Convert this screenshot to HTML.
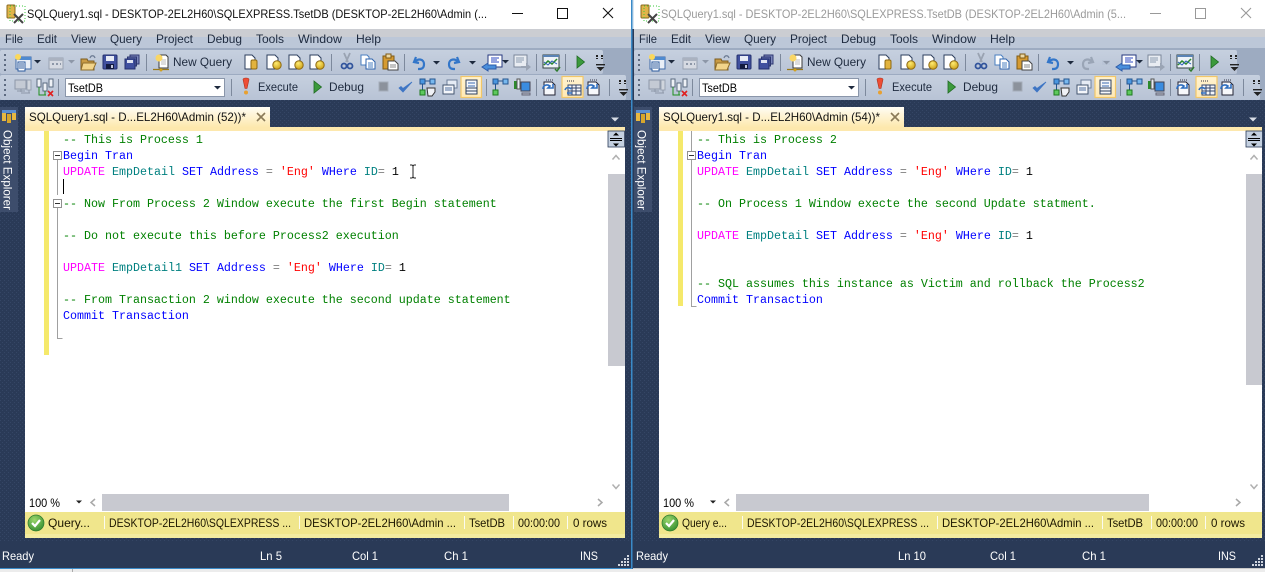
<!DOCTYPE html>
<html><head><meta charset="utf-8"><title>SQLQuery1.sql</title>
<style>
html,body{margin:0;padding:0;background:#e8e8e8;overflow:hidden}
svg{display:block}
text{font-family:"Liberation Sans",sans-serif;font-size:12px;fill:#1e2a3e;white-space:pre}
.c text,text.m{font-family:"Liberation Mono",monospace;font-size:11.67px}
.w{fill:#fff}
.k{fill:#00f}.g{fill:#008000}.p{fill:#f0f}.t{fill:#008080}.s{fill:#f00}.o{fill:#808080}.b{fill:#000}
.st{fill:#1c1600}
</style></head><body>
<svg width="1265" height="572" viewBox="0 0 1265 572" xmlns="http://www.w3.org/2000/svg">
<defs>
<pattern id="dots" width="4" height="4" patternUnits="userSpaceOnUse"><rect width="4" height="4" fill="#2a3a57"/><rect width="1" height="1" fill="#354665"/><rect x="2" y="2" width="1" height="1" fill="#354665"/></pattern>
<linearGradient id="tab" x1="0" y1="0" x2="0" y2="1"><stop offset="0" stop-color="#fffdf6"/><stop offset=".35" stop-color="#fef5da"/><stop offset="1" stop-color="#fde9ae"/></linearGradient>
<linearGradient id="tb" x1="0" y1="0" x2="0" y2="1"><stop offset="0" stop-color="#c6d0df"/><stop offset="1" stop-color="#b8c3d5"/></linearGradient>
<linearGradient id="hl" x1="0" y1="0" x2="0" y2="1"><stop offset="0" stop-color="#fff3d0"/><stop offset="1" stop-color="#ffe9b5"/></linearGradient>
<radialGradient id="gok" cx=".4" cy=".3" r=".8"><stop offset="0" stop-color="#9bd66c"/><stop offset="1" stop-color="#2e8a2c"/></radialGradient>
<radialGradient id="gy" cx=".4" cy=".3" r=".8"><stop offset="0" stop-color="#ffeb70"/><stop offset="1" stop-color="#c89a10"/></radialGradient>

<g id="grip"><rect x="0" y="0" width="2" height="2" fill="#5d6a80"/><rect x="0" y="5" width="2" height="2" fill="#5d6a80"/><rect x="0" y="10" width="2" height="2" fill="#5d6a80"/><rect x="0" y="15" width="2" height="2" fill="#5d6a80"/></g>
<g id="endg"><path d="M2 0v4M7 0v4" stroke="#222" stroke-width="2" stroke-dasharray="2 1"/><rect x="1" y="9" width="9" height="1.4" fill="#222"/><path d="M1.500 12h8l-4 4z" fill="#222"/></g>
<path id="da" d="M0 0h7l-3.500 3.500z" fill="#1e2a3e"/>
<path id="dag" d="M0 0h7l-3.500 3.500z" fill="#8d97a8"/>
<g id="cyl"><path d="M1 1h7l3 3v11H1z" fill="#fff" stroke="#2d3f5e"/><rect x="7" y="6" width="6" height="9" rx="1.500" fill="#e2b33d" stroke="#8f6a12"/></g>
<g id="coin"><path d="M1 1h8l3 3v11H1z" fill="#fff" stroke="#2d3f5e"/><circle cx="11" cy="11" r="4.200" fill="url(#gy)" stroke="#8f6a12"/></g>
<g id="bin"><path d="M1 2h8l3 3v10H1z" fill="#f7f8fb" stroke="#223"/><path d="M3 0h3M7 0h3" stroke="#334" stroke-dasharray="1 1"/><path d="M0 9c0-4 4-5 7-3l-2 2 5 0 0-4" fill="none" stroke="#2f6fc0" stroke-width="1.600"/></g>

<g id="toolbars">
<!-- bands -->
<rect x="0" y="47" width="631" height="53" fill="#9dabc1"/>
<rect x="0" y="37" width="631" height="11" fill="#bcc7d8"/>
<rect x="0" y="29" width="631" height="8" fill="#cbcdd2"/>
<rect x="0" y="50" width="603" height="24" rx="2" fill="url(#tb)"/>
<rect x="0" y="75" width="626" height="25" rx="2" fill="url(#tb)"/>
<use href="#grip" x="4" y="54"/><use href="#grip" x="4" y="79"/>
<!-- row1 -->
<g transform="translate(14 54)"><rect x="2" y="3" width="15" height="12" fill="#e9eef6" stroke="#3f6aa8"/><rect x="2" y="3" width="15" height="3" fill="#4f8ad0"/><rect x="4" y="8" width="7" height="9" fill="#fff" stroke="#2b5a9e"/><path d="M5 10h5M5 12h5M5 14h5" stroke="#2b5a9e"/><circle cx="4" cy="3" r="3" fill="#fbd85a"/></g>
<use href="#da" x="34" y="60"/>
<g transform="translate(48 54)"><rect x="1" y="4" width="14" height="11" fill="#d6dae2" stroke="#98a2b2"/><rect x="1" y="4" width="14" height="3" fill="#aab2c0"/><path d="M4 10h2M8 10h2M12 10h1" stroke="#8d97a8" stroke-width="2"/></g>
<use href="#dag" x="68" y="60"/>
<g transform="translate(80 54)"><path d="M1 5h6l1 2h6v9H1z" fill="#c99b45" stroke="#7c5c21"/><path d="M3 9h13l-3 7H1z" fill="#f2d48a" stroke="#8f6e2c"/><path d="M10 4c1-3 4-3 5 0" fill="none" stroke="#6d7c94" stroke-width="1.300"/></g>
<g transform="translate(103 55)"><rect x="0" y="0" width="14" height="14" rx="1" fill="#40509f" stroke="#232f6e"/><rect x="3" y="1" width="8" height="5" fill="#e8ecf6"/><rect x="3" y="9" width="8" height="5" fill="#121a40"/><rect x="8" y="10" width="2" height="3" fill="#c4c9dd"/></g>
<g transform="translate(125 55)"><rect x="5" y="0" width="9" height="9" fill="#7b87bb" stroke="#2c3670"/><rect x="2.500" y="2" width="9" height="9" fill="#5e6bab" stroke="#2c3670"/><rect x="0" y="4" width="10" height="10" fill="#40509f" stroke="#232f6e"/><rect x="2" y="5" width="6" height="3" fill="#dfe4f2"/></g>
<rect x="146" y="54" width="1" height="17" fill="#7d899c"/>
<g transform="translate(153 53)"><path d="M6 2h7l2 2v11H6z" fill="#fff" stroke="#3b3b3b"/><path d="M8 7h5M8 9h5M8 11h5" stroke="#bbb"/><circle cx="6" cy="5" r="3.500" fill="#f9d665"/><path d="M0 16.500h16M8 15v3" stroke="#9a7a1a" stroke-width="1.300"/><circle cx="8" cy="17" r="1.500" fill="#d0a020"/></g>
<use href="#cyl" x="244" y="54"/><use href="#coin" x="266" y="54"/><use href="#coin" x="288" y="54"/><use href="#coin" x="309" y="54"/>
<rect x="331" y="54" width="1" height="17" fill="#7d899c"/>
<g transform="translate(341 53)"><path d="M3 0l4 9M9 0L5 9" stroke="#9aa3b2" stroke-width="1.800"/><circle cx="3" cy="13" r="2.500" fill="none" stroke="#31549c" stroke-width="1.800"/><circle cx="9" cy="13" r="2.500" fill="none" stroke="#31549c" stroke-width="1.800"/></g>
<g transform="translate(361 55)"><path d="M0 0h6l2 2v8H0z" fill="#fff" stroke="#4a7fc0"/><path d="M5 4h6l3 3v7H5z" fill="#fff" stroke="#2d63ad"/><path d="M7 8h5M7 10h5M7 12h5" stroke="#4a7fc0"/></g>
<g transform="translate(382 54)"><rect x="1" y="2" width="11" height="13" fill="#d69b32" stroke="#7f5a14"/><rect x="4" y="0" width="5" height="4" fill="#ecd9a6" stroke="#7f5a14"/><path d="M6 7h7l3 3v6H6z" fill="#fff" stroke="#444"/><path d="M8 11h6M8 13h6" stroke="#888"/></g>
<rect x="404" y="54" width="1" height="17" fill="#7d899c"/>
<path d="M416 57l-2 5 5 1M415 62c3-4 9-3 9 2s-3 5-6 5" fill="none" stroke="#3376c9" stroke-width="2.200"/>
<use href="#da" x="433" y="61"/>
<use href="#da" x="469" y="61"/>
<g transform="translate(481 54)"><rect x="7" y="1" width="14" height="12" fill="#fff" stroke="#26387f"/><path d="M10 4h8M10 6h6M10 8h8" stroke="#2c49c0"/><path d="M1 13l6-4v2h8v4H7v2z" fill="#4a8fdc" stroke="#2d5ba8"/></g>
<use href="#da" x="502" y="60"/>
<g transform="translate(514 55)"><rect x="0" y="0" width="13" height="12" fill="#e8ecf2" stroke="#7b879a"/><path d="M2 3h8M2 5h8M2 7h6" stroke="#8d9bb0"/><path d="M7 11h5V8l5 4-5 4v-3H7z" fill="#9aa4b4"/></g>
<rect x="536" y="54" width="1" height="17" fill="#7d899c"/>
<g transform="translate(543 54)"><rect x="0" y="1" width="16" height="13" fill="#eef3f8" stroke="#344"/><rect x="0" y="1" width="16" height="2" fill="#5a83b5"/><path d="M1 11l4-4 4 3 5-5" fill="none" stroke="#2d8a2d" stroke-width="1.500"/><path d="M1 8l4 3 4-4 5 3" fill="none" stroke="#2d5fb8"/><path d="M12 15l2 2 3-4" fill="none" stroke="#2d7a2d" stroke-width="1.500"/></g>
<rect x="565" y="54" width="1" height="17" fill="#7d899c"/>
<path d="M577 56l7.500 6-7.500 6z" fill="#3c9a3c" stroke="#1f6a22" stroke-width=".8"/>
<use href="#endg" x="595" y="55"/>
<!-- row 2 -->
<g transform="translate(14 79)"><rect x="1" y="1" width="11" height="9" fill="#c4cad4" stroke="#8d97a8"/><path d="M3 12h8M7 10v3" stroke="#8d97a8"/><rect x="13" y="1" width="4" height="10" fill="#d0d5dd" stroke="#98a2b2"/><path d="M7 14h9M15 11v3" stroke="#8d97a8"/></g>
<g transform="translate(37 79)"><rect x="0" y="0" width="4" height="8" fill="#eef1f6" stroke="#5a6a80"/><rect x="6" y="4" width="4" height="8" fill="#eef1f6" stroke="#5a6a80"/><rect x="12" y="0" width="4" height="8" fill="#eef1f6" stroke="#5a6a80"/><path d="M2 8v8h7M8 12v4" fill="none" stroke="#1d8f1d"/><path d="M11 12l5 5M16 12l-5 5" stroke="#e02020" stroke-width="1.600"/></g>
<rect x="58" y="79" width="1" height="17" fill="#7d899c"/>
<rect x="65.500" y="78.500" width="159" height="18" fill="#fff" stroke="#8a96aa"/>
<use href="#da" x="214" y="86"/>
<rect x="231" y="79" width="1" height="17" fill="#7d899c"/>
<path d="M243 79.500c0-2 6-2 6 0l-2 9h-2z" fill="#ee4d35" stroke="#a9331f" stroke-width=".6"/><circle cx="246" cy="92.500" r="2" fill="#e8a030"/>
<path d="M314 81l7.500 6-7.500 6z" fill="#3c9a3c" stroke="#1f6a22" stroke-width=".8"/>
<rect x="379" y="82" width="9" height="9" fill="#8c929c" stroke="#a5adba"/>
<path d="M399 88l4 4 9-10-9 6.500-2-2z" fill="#3e75c4" stroke="#3e75c4" stroke-width=".8"/>
<g transform="translate(420 79)"><rect x="0" y="0" width="5" height="5" fill="#4a97e0" stroke="#25558f"/><rect x="10" y="0" width="5" height="5" fill="#78b8ee" stroke="#25558f"/><path d="M5 2h5M2.500 5v6" stroke="#25558f"/><rect x="0" y="11" width="5" height="5" fill="#5ec95e" stroke="#1f7a1f"/><path d="M7 9h8v4l-3 4H8z" fill="#f0f2f6" stroke="#333"/></g>
<g transform="translate(443 80)"><rect x="4" y="0" width="10" height="8" fill="#e6ecf5" stroke="#6d7f9a"/><rect x="0" y="5" width="11" height="9" fill="#f4f6fa" stroke="#445670"/><path d="M2 8h7M2 10h7" stroke="#5070a0"/></g>
<rect x="461" y="76.500" width="20.500" height="21" fill="url(#hl)" stroke="#f2c768" stroke-width="1.200"/>
<g transform="translate(466 80)"><rect x="0" y="0" width="11" height="14" fill="#f6f8fb" stroke="#2d3f5e"/><path d="M2 3h7M2 6h7" stroke="#3b6ab0"/><path d="M0 8h11M0 11h11" stroke="#2d3f5e"/></g>
<rect x="486" y="79" width="1" height="17" fill="#7d899c"/>
<g transform="translate(493 79)"><rect x="0" y="0" width="5" height="5" fill="#4a97e0" stroke="#25558f"/><rect x="10" y="0" width="5" height="5" fill="#78b8ee" stroke="#25558f"/><path d="M5 2h5M2.500 5v6" stroke="#25558f"/><rect x="0" y="11" width="5" height="5" fill="#5ec95e" stroke="#1f7a1f"/></g>
<g transform="translate(514 79)"><rect x="0" y="2" width="3" height="8" fill="#2d8a2d"/><rect x="3" y="0" width="3" height="10" fill="#e8ecf2" stroke="#555"/><rect x="7" y="3" width="9" height="9" fill="#3a8ce0" stroke="#445"/><rect x="8" y="14" width="8" height="2" fill="#b5bcc8" stroke="#667"/></g>
<rect x="536" y="79" width="1" height="17" fill="#7d899c"/>
<use href="#bin" x="543" y="80"/>
<rect x="562" y="76.500" width="21" height="21" fill="url(#hl)" stroke="#f2c768" stroke-width="1.200"/>
<g transform="translate(565 80)"><path d="M3 5h13v10H3zM3 8h13M3 11h13M7 5v10M11 5v10" fill="#f5f7fa" stroke="#33456a"/><path d="M2 1h3M6 1h3" stroke="#334" stroke-dasharray="1 1"/><path d="M0 10c1-3 4-3 6-1M2 13h5" fill="none" stroke="#2f6fc0" stroke-width="1.600"/></g>
<use href="#bin" x="587" y="80"/>
<rect x="609" y="79" width="1" height="17" fill="#7d899c"/>
<use href="#endg" x="618" y="80"/>
</g>
</defs>

<rect width="1265" height="572" fill="#e6e6e6"/>
<!-- LEFT WINDOW -->
<rect x="0" y="0" width="632" height="29" fill="#fff"/>
<use href="#toolbars"/>
<rect x="0" y="100" width="631" height="468" fill="url(#dots)"/>
<!-- RIGHT WINDOW -->
<rect x="633" y="0" width="632" height="29" fill="#fff"/>
<use href="#toolbars" x="634"/>
<rect x="1265" y="0" width="2" height="100" fill="#fff"/>
<rect x="633" y="100" width="632" height="468" fill="url(#dots)"/>
<rect x="631" y="0" width="1.500" height="569" fill="#3a8ac8"/>
<rect x="632.500" y="0" width="1.500" height="569" fill="#2a3a57"/>
<rect x="632.500" y="0" width="1.500" height="29" fill="#d8e6f2"/>
<rect x="0" y="568" width="632" height="1" fill="#3a8ac8"/>
<rect x="0" y="569" width="1265" height="3" fill="#ececec"/>
<rect x="72" y="569" width="1" height="3" fill="#aaa"/>
<rect x="633" y="568" width="632" height="1" fill="#c9c9c9"/>

<!-- Title icons -->
<g transform="translate(7 5)"><rect x="0" y="0" width="8" height="13" rx="1" fill="#e0b44a" stroke="#8a6a20"/><rect x="3" y="1" width="15" height="15" fill="none" stroke="#3cc93c" stroke-dasharray="1 2"/><path d="M7 9l9 9M16 9l-9 9" stroke="#444" stroke-width="2"/></g>
<g transform="translate(641 5)"><rect x="0" y="0" width="8" height="13" rx="1" fill="#e0b44a" stroke="#8a6a20"/><rect x="3" y="1" width="15" height="15" fill="none" stroke="#3cc93c" stroke-dasharray="1 2"/><path d="M7 9l9 9M16 9l-9 9" stroke="#444" stroke-width="2"/></g>
<!-- Title text -->
<text x="27" y="18" textLength="460" lengthAdjust="spacingAndGlyphs" fill="#000" style="fill:#111">SQLQuery1.sql - DESKTOP-2EL2H60\SQLEXPRESS.TsetDB (DESKTOP-2EL2H60\Admin (...</text>
<text x="661" y="18" textLength="465" lengthAdjust="spacingAndGlyphs" style="fill:#9a9a9a">SQLQuery1.sql - DESKTOP-2EL2H60\SQLEXPRESS.TsetDB (DESKTOP-2EL2H60\Admin (5...</text>
<!-- Window controls -->
<path d="M512 13.500h11" stroke="#111"/><rect x="557.500" y="8.500" width="10" height="10" fill="none" stroke="#111"/><path d="M603 8l10 10M613 8l-10 10" stroke="#111" stroke-width="1.100"/>
<path d="M1150 13.500h11" stroke="#999"/><rect x="1195.500" y="8.500" width="10" height="10" fill="none" stroke="#999"/><path d="M1241 8l10 10M1251 8l-10 10" stroke="#999" stroke-width="1.100"/>

<!-- Menus -->
<g id="menuL">
<text x="5" y="43" textLength="18" lengthAdjust="spacingAndGlyphs">File</text><text x="37" y="43" textLength="20" lengthAdjust="spacingAndGlyphs">Edit</text><text x="71" y="43" textLength="25" lengthAdjust="spacingAndGlyphs">View</text><text x="110" y="43" textLength="32" lengthAdjust="spacingAndGlyphs">Query</text><text x="156" y="43" textLength="37" lengthAdjust="spacingAndGlyphs">Project</text><text x="207" y="43" textLength="35" lengthAdjust="spacingAndGlyphs">Debug</text><text x="256" y="43" textLength="28" lengthAdjust="spacingAndGlyphs">Tools</text><text x="298" y="43" textLength="44" lengthAdjust="spacingAndGlyphs">Window</text><text x="356" y="43" textLength="25" lengthAdjust="spacingAndGlyphs">Help</text>
<text x="173" y="66" textLength="59" lengthAdjust="spacingAndGlyphs">New Query</text>
<text x="68" y="92" textLength="35" lengthAdjust="spacingAndGlyphs" style="fill:#000">TsetDB</text>
<text x="258" y="91" textLength="40" lengthAdjust="spacingAndGlyphs">Execute</text>
<text x="329" y="91" textLength="35" lengthAdjust="spacingAndGlyphs">Debug</text>
</g>
<g transform="translate(634 0)">
<text x="5" y="43" textLength="18" lengthAdjust="spacingAndGlyphs">File</text><text x="37" y="43" textLength="20" lengthAdjust="spacingAndGlyphs">Edit</text><text x="71" y="43" textLength="25" lengthAdjust="spacingAndGlyphs">View</text><text x="110" y="43" textLength="32" lengthAdjust="spacingAndGlyphs">Query</text><text x="156" y="43" textLength="37" lengthAdjust="spacingAndGlyphs">Project</text><text x="207" y="43" textLength="35" lengthAdjust="spacingAndGlyphs">Debug</text><text x="256" y="43" textLength="28" lengthAdjust="spacingAndGlyphs">Tools</text><text x="298" y="43" textLength="44" lengthAdjust="spacingAndGlyphs">Window</text><text x="356" y="43" textLength="25" lengthAdjust="spacingAndGlyphs">Help</text>
<text x="173" y="66" textLength="59" lengthAdjust="spacingAndGlyphs">New Query</text>
<text x="68" y="92" textLength="35" lengthAdjust="spacingAndGlyphs" style="fill:#000">TsetDB</text>
<text x="258" y="91" textLength="40" lengthAdjust="spacingAndGlyphs">Execute</text>
<text x="329" y="91" textLength="35" lengthAdjust="spacingAndGlyphs">Debug</text>
</g>
<!-- redo -->
<path d="M457 57l2 5-5 1M458 62c-3-4-9-3-9 2s3 5 6 5" fill="none" stroke="#3376c9" stroke-width="2.200"/>
<path d="M1091 57l2 5-5 1M1092 62c-3-4-9-3-9 2s3 5 6 5" fill="none" stroke="#9aa5b6" stroke-width="2.200"/>
<rect x="1102" y="60" width="8" height="5" fill="#b9c4d6"/><use href="#dag" x="1103" y="61"/>

<!-- Sidebars -->
<rect x="0" y="107" width="18" height="105" fill="#3d4d6c"/>
<rect x="634" y="107" width="18" height="105" fill="#3d4d6c"/>
<g id="oe"><rect x="2" y="110" width="14" height="3" fill="#5c8fd0"/><rect x="2" y="113" width="4" height="8" fill="#e8b840"/><rect x="7" y="114" width="4" height="9" fill="#d6a52c"/><rect x="12" y="113" width="4" height="7" fill="#e8b840"/></g>
<use href="#oe" x="634"/>
<text transform="translate(3.500 130) rotate(90)" textLength="80" lengthAdjust="spacingAndGlyphs" class="w" style="fill:#fff">Object Explorer</text>
<text transform="translate(637.500 130) rotate(90)" textLength="80" lengthAdjust="spacingAndGlyphs" style="fill:#fff">Object Explorer</text>

<!-- Tabs -->
<path d="M25 127v-20h245v20z" fill="url(#tab)"/>
<path d="M659 127v-20h245v20z" fill="url(#tab)"/>
<text x="29" y="121" textLength="217" lengthAdjust="spacingAndGlyphs" style="fill:#111">SQLQuery1.sql - D...EL2H60\Admin (52))*</text>
<text x="663" y="121" textLength="217" lengthAdjust="spacingAndGlyphs" style="fill:#111">SQLQuery1.sql - D...EL2H60\Admin (54))*</text>
<path d="M257 113l8 8M265 113l-8 8" stroke="#8a7a58" stroke-width="1.600"/>
<path d="M891 113l8 8M899 113l-8 8" stroke="#8a7a58" stroke-width="1.600"/>
<path d="M611 117.500h8l-4 4z" fill="#d8dde6"/>
<path d="M1249 117.500h8l-4 4z" fill="#d8dde6"/>

<!-- Editors -->
<rect x="25" y="127" width="600" height="4" fill="#fde8ad"/>
<rect x="659" y="127" width="603" height="4" fill="#fde8ad"/>
<rect x="25" y="131" width="600" height="363" fill="#fff"/>
<rect x="659" y="131" width="603" height="363" fill="#fff"/>
<rect x="25" y="494" width="600" height="18" fill="#fff"/>
<rect x="659" y="494" width="603" height="18" fill="#fff"/>
<!-- margin bars -->
<rect x="44" y="131" width="5" height="224" fill="#f5e96b"/>
<rect x="678" y="131" width="5" height="175" fill="#f5e96b"/>
<!-- fold -->
<path d="M57.500 160v35M57.500 208v130.500h5" fill="none" stroke="#a0a0a0"/>
<rect x="53.500" y="151.500" width="8" height="8" fill="#fff" stroke="#909090"/><path d="M55 155.500h5" stroke="#333"/>
<rect x="53.500" y="199.500" width="8" height="8" fill="#fff" stroke="#909090"/><path d="M55 203.500h5" stroke="#333"/>
<path d="M691.500 131v20M691.500 160v146.500h5" fill="none" stroke="#a0a0a0"/>
<rect x="687.500" y="151.500" width="8" height="8" fill="#fff" stroke="#909090"/><path d="M689 155.500h5" stroke="#333"/>
<!-- code left -->
<g class="c">
<text x="63" y="143" class="g" style="fill:#008000">-- This is Process 1</text>
<text x="63" y="159" style="fill:#00f">Begin Tran</text>
<text x="63" y="175"><tspan class="p">UPDATE</tspan><tspan> </tspan><tspan class="t">EmpDetail</tspan><tspan> </tspan><tspan class="k">SET</tspan><tspan> </tspan><tspan class="k">Address</tspan><tspan> </tspan><tspan class="o">=</tspan><tspan> </tspan><tspan class="s">'Eng'</tspan><tspan> </tspan><tspan class="k">WHere</tspan><tspan> </tspan><tspan class="t">ID</tspan><tspan class="o">=</tspan><tspan> </tspan><tspan class="b">1</tspan></text>
<text x="63" y="207" style="fill:#008000">-- Now From Process 2 Window execute the first Begin statement</text>
<text x="63" y="239" style="fill:#008000">-- Do not execute this before Process2 execution</text>
<text x="63" y="271"><tspan class="p">UPDATE</tspan><tspan> </tspan><tspan class="t">EmpDetail1</tspan><tspan> </tspan><tspan class="k">SET</tspan><tspan> </tspan><tspan class="k">Address</tspan><tspan> </tspan><tspan class="o">=</tspan><tspan> </tspan><tspan class="s">'Eng'</tspan><tspan> </tspan><tspan class="k">WHere</tspan><tspan> </tspan><tspan class="t">ID</tspan><tspan class="o">=</tspan><tspan> </tspan><tspan class="b">1</tspan></text>
<text x="63" y="303" style="fill:#008000">-- From Transaction 2 window execute the second update statement</text>
<text x="63" y="319" style="fill:#00f">Commit Transaction</text>
<!-- code right -->
<text x="697" y="143" style="fill:#008000">-- This is Process 2</text>
<text x="697" y="159" style="fill:#00f">Begin Tran</text>
<text x="697" y="175"><tspan class="p">UPDATE</tspan><tspan> </tspan><tspan class="t">EmpDetail</tspan><tspan> </tspan><tspan class="k">SET</tspan><tspan> </tspan><tspan class="k">Address</tspan><tspan> </tspan><tspan class="o">=</tspan><tspan> </tspan><tspan class="s">'Eng'</tspan><tspan> </tspan><tspan class="k">WHere</tspan><tspan> </tspan><tspan class="t">ID</tspan><tspan class="o">=</tspan><tspan> </tspan><tspan class="b">1</tspan></text>
<text x="697" y="207" style="fill:#008000">-- On Process 1 Window execte the second Update statment.</text>
<text x="697" y="239"><tspan class="p">UPDATE</tspan><tspan> </tspan><tspan class="t">EmpDetail</tspan><tspan> </tspan><tspan class="k">SET</tspan><tspan> </tspan><tspan class="k">Address</tspan><tspan> </tspan><tspan class="o">=</tspan><tspan> </tspan><tspan class="s">'Eng'</tspan><tspan> </tspan><tspan class="k">WHere</tspan><tspan> </tspan><tspan class="t">ID</tspan><tspan class="o">=</tspan><tspan> </tspan><tspan class="b">1</tspan></text>
<text x="697" y="287" style="fill:#008000">-- SQL assumes this instance as Victim and rollback the Process2</text>
<text x="697" y="303" style="fill:#00f">Commit Transaction</text>
</g>
<!-- caret & I-beam -->
<rect x="63" y="179" width="1" height="15" fill="#000"/>
<path d="M410 165h2l1 1 1-1h2M413 166v11M410 178h2l1-1 1 1h2" fill="none" stroke="#222"/>

<!-- scrollbars v -->
<rect x="608" y="174" width="17" height="192" fill="#c8c9d0"/>
<rect x="1246" y="174" width="16" height="211" fill="#c8c9d0"/>
<g id="split"><rect x="608" y="131" width="16.500" height="16" fill="#c4d0e0" stroke="#2a3a57" stroke-width=".8"/><path d="M610 138.500h12M610 140.500h12" stroke="#000" stroke-width="1.100"/><path d="M616 132.500l3 3h-6zM616 146.500l3-3h-6z" fill="#000"/></g>
<use href="#split" x="638"/>
<path d="M612.500 159.500l3.500-4 3.500 4" fill="none" stroke="#b0b0b0" stroke-width="1.500"/>
<path d="M1250.500 159.500l3.500-4 3.500 4" fill="none" stroke="#b0b0b0" stroke-width="1.500"/>
<path d="M612.500 484.500l3.500 4 3.500-4" fill="none" stroke="#b0b0b0" stroke-width="1.500"/>
<path d="M1250.500 484.500l3.500 4 3.500-4" fill="none" stroke="#b0b0b0" stroke-width="1.500"/>
<!-- scrollbars h -->
<rect x="102" y="494" width="407" height="17" fill="#c8c9d0"/>
<rect x="736" y="494" width="413" height="17" fill="#c8c9d0"/>
<text x="29" y="507" textLength="31" lengthAdjust="spacingAndGlyphs" style="fill:#000">100 %</text>
<text x="663" y="507" textLength="31" lengthAdjust="spacingAndGlyphs" style="fill:#000">100 %</text>
<path d="M76 500.500h6l-3 3z" fill="#222"/><path d="M710 500.500h6l-3 3z" fill="#222"/>
<path d="M95 499l-4 3.500 4 3.500" fill="none" stroke="#a8a8a8" stroke-width="1.500"/>
<path d="M729 499l-4 3.500 4 3.500" fill="none" stroke="#a8a8a8" stroke-width="1.500"/>
<path d="M598 499l4 3.500-4 3.500" fill="none" stroke="#a8a8a8" stroke-width="1.500"/>
<path d="M1236 499l4 3.500-4 3.500" fill="none" stroke="#a8a8a8" stroke-width="1.500"/>

<!-- yellow status -->
<rect x="25" y="512" width="600" height="26" fill="#f0e68c"/>
<rect x="659" y="512" width="603" height="26" fill="#f0e68c"/>
<rect x="25" y="534" width="600" height="4" fill="#f3eca0"/>
<rect x="659" y="534" width="603" height="4" fill="#f3eca0"/>
<g id="ok"><circle cx="36" cy="523" r="8" fill="url(#gok)" stroke="#2d7a2d" stroke-width=".7"/><path d="M32 523l3 3 5-6" fill="none" stroke="#fff" stroke-width="2.200"/></g>
<use href="#ok" x="634"/>
<g fill="#fbfbf0">
<rect x="104" y="516" width="1" height="13"/><rect x="299" y="516" width="1" height="13"/><rect x="464" y="516" width="1" height="13"/><rect x="513" y="516" width="1" height="13"/><rect x="567" y="516" width="1" height="13"/>
<rect x="742" y="516" width="1" height="13"/><rect x="937" y="516" width="1" height="13"/><rect x="1102" y="516" width="1" height="13"/><rect x="1151" y="516" width="1" height="13"/><rect x="1205" y="516" width="1" height="13"/>
</g>
<text x="48" y="527" textLength="42" lengthAdjust="spacingAndGlyphs" class="st">Query...</text>
<text x="109" y="527" textLength="182" lengthAdjust="spacingAndGlyphs" class="st">DESKTOP-2EL2H60\SQLEXPRESS ...</text>
<text x="304" y="527" textLength="152" lengthAdjust="spacingAndGlyphs" class="st">DESKTOP-2EL2H60\Admin ...</text>
<text x="469" y="527" textLength="36" lengthAdjust="spacingAndGlyphs" class="st">TsetDB</text>
<text x="518" y="527" textLength="42" lengthAdjust="spacingAndGlyphs" class="st">00:00:00</text>
<text x="573" y="527" textLength="34" lengthAdjust="spacingAndGlyphs" class="st">0 rows</text>
<text x="682" y="527" textLength="45" lengthAdjust="spacingAndGlyphs" class="st">Query e...</text>
<text x="747" y="527" textLength="182" lengthAdjust="spacingAndGlyphs" class="st">DESKTOP-2EL2H60\SQLEXPRESS ...</text>
<text x="942" y="527" textLength="152" lengthAdjust="spacingAndGlyphs" class="st">DESKTOP-2EL2H60\Admin ...</text>
<text x="1107" y="527" textLength="36" lengthAdjust="spacingAndGlyphs" class="st">TsetDB</text>
<text x="1156" y="527" textLength="42" lengthAdjust="spacingAndGlyphs" class="st">00:00:00</text>
<text x="1211" y="527" textLength="34" lengthAdjust="spacingAndGlyphs" class="st">0 rows</text>

<!-- bottom status -->
<rect x="0" y="541" width="631" height="27" fill="#2a3a57"/>
<rect x="634" y="541" width="631" height="27" fill="#2a3a57"/>
<g style="fill:#fff">
<text x="2" y="560" textLength="32" lengthAdjust="spacingAndGlyphs" style="fill:#fff">Ready</text>
<text x="260" y="560" textLength="22" lengthAdjust="spacingAndGlyphs" style="fill:#fff">Ln 5</text>
<text x="352" y="560" textLength="26" lengthAdjust="spacingAndGlyphs" style="fill:#fff">Col 1</text>
<text x="444" y="560" textLength="24" lengthAdjust="spacingAndGlyphs" style="fill:#fff">Ch 1</text>
<text x="580" y="560" textLength="18" lengthAdjust="spacingAndGlyphs" style="fill:#fff">INS</text>
<text x="636" y="560" textLength="32" lengthAdjust="spacingAndGlyphs" style="fill:#fff">Ready</text>
<text x="898" y="560" textLength="28" lengthAdjust="spacingAndGlyphs" style="fill:#fff">Ln 10</text>
<text x="990" y="560" textLength="26" lengthAdjust="spacingAndGlyphs" style="fill:#fff">Col 1</text>
<text x="1082" y="560" textLength="24" lengthAdjust="spacingAndGlyphs" style="fill:#fff">Ch 1</text>
<text x="1218" y="560" textLength="18" lengthAdjust="spacingAndGlyphs" style="fill:#fff">INS</text>
</g>
<g id="sz" fill="#d0d6e0"><rect x="627" y="555" width="2" height="2"/><rect x="624" y="558" width="2" height="2"/><rect x="627" y="558" width="2" height="2"/><rect x="621" y="561" width="2" height="2"/><rect x="624" y="561" width="2" height="2"/><rect x="627" y="561" width="2" height="2"/><rect x="618" y="564" width="2" height="2"/><rect x="621" y="564" width="2" height="2"/><rect x="624" y="564" width="2" height="2"/><rect x="627" y="564" width="2" height="2"/></g>
<use href="#sz" x="634"/>
</svg>
</body></html>
